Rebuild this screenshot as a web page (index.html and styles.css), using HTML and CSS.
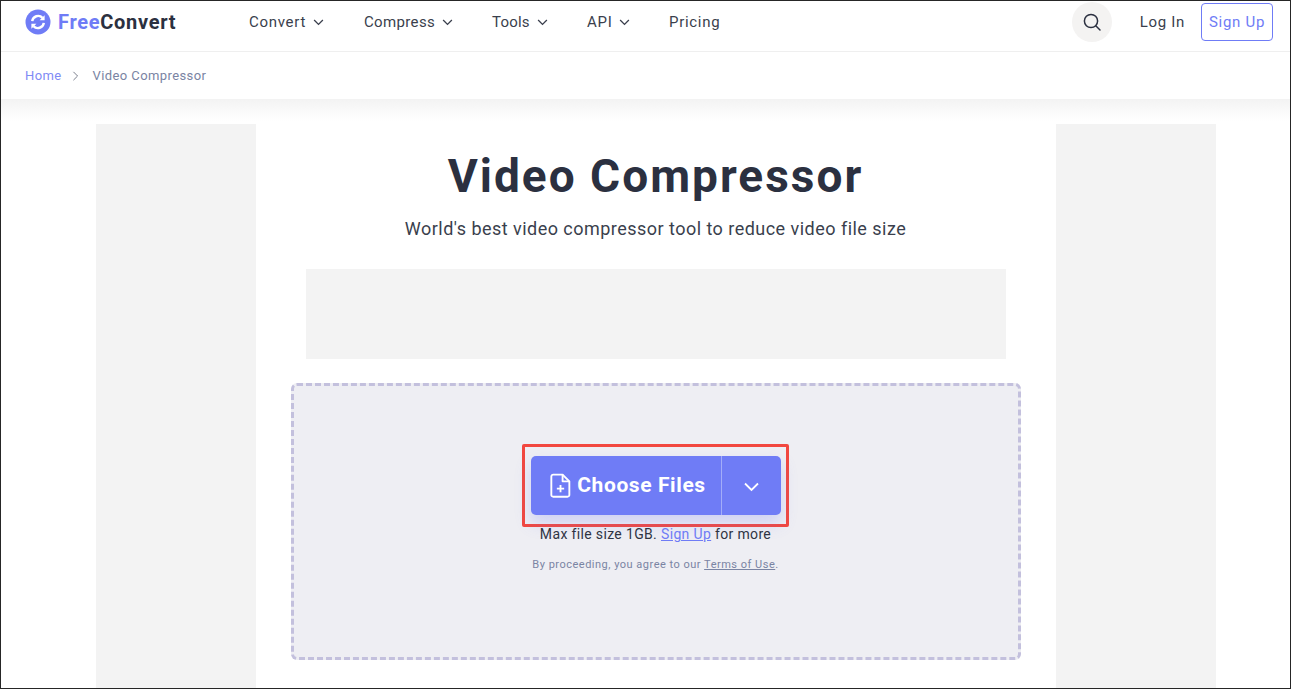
FILE: index.html
```html
<!DOCTYPE html>
<html lang="en">
<head>
    <meta charset="UTF-8">
    <meta name="viewport" content="width=device-width, initial-scale=1.0">
    <title>Video Compressor</title>
    <link rel="stylesheet" href="styles.css">
</head>
<body>
    <div class="frame">
        <!-- Top navigation -->
        <header class="topbar">
            <a class="logo" href="#">
                <svg class="logo-icon" viewBox="0 0 26 26" width="26" height="26">
                    <circle cx="13" cy="13" r="12.5" fill="#6f7cf6"/>
                    <path d="M7.2 12.2a6 6 0 0 1 10.3-3.4" fill="none" stroke="#fff" stroke-width="2.4"/>
                    <path d="M18.8 13.8a6 6 0 0 1-10.3 3.4" fill="none" stroke="#fff" stroke-width="2.4"/>
                    <path d="M19.6 6.2v5h-5z" fill="#fff"/>
                    <path d="M6.4 19.8v-5h5z" fill="#fff"/>
                </svg>
                <span class="logo-free">Free</span><span class="logo-convert">Convert</span>
            </a>
            <nav class="nav">
                <a class="nav-item nav-convert" href="#">Convert
                    <svg class="chev" viewBox="0 0 12 8" width="11" height="7"><path d="M1 1.2l5 5 5-5"/></svg>
                </a>
                <a class="nav-item nav-compress" href="#">Compress
                    <svg class="chev" viewBox="0 0 12 8" width="11" height="7"><path d="M1 1.2l5 5 5-5"/></svg>
                </a>
                <a class="nav-item nav-tools" href="#">Tools
                    <svg class="chev" viewBox="0 0 12 8" width="11" height="7"><path d="M1 1.2l5 5 5-5"/></svg>
                </a>
                <a class="nav-item nav-api" href="#">API
                    <svg class="chev" viewBox="0 0 12 8" width="11" height="7"><path d="M1 1.2l5 5 5-5"/></svg>
                </a>
                <a class="nav-item" href="#">Pricing</a>
            </nav>
            <div class="topbar-right">
                <button class="search-btn">
                    <svg viewBox="0 0 20 20" width="20" height="20">
                        <circle cx="9" cy="9" r="6.6" fill="none" stroke="#2b3040" stroke-width="1.5"/>
                        <path d="M14 14l4 4" stroke="#2b3040" stroke-width="1.5" stroke-linecap="round"/>
                    </svg>
                </button>
                <a class="login" href="#">Log In</a>
                <a class="signup" href="#">Sign Up</a>
            </div>
        </header>

        <!-- Breadcrumb -->
        <div class="breadcrumb">
            <a href="#">Home</a>
            <svg class="crumb-sep" viewBox="0 0 8 12" width="7" height="10"><path d="M1.5 1l5 5-5 5"/></svg>
            <span>Video Compressor</span>
        </div>

        <div class="page">
            <div class="ad-side"></div>
            <main class="main">
                <h1>Video Compressor</h1>
                <p class="subtitle">World's best video compressor tool to reduce video file size</p>
                <div class="ad-top"></div>
                <section class="dropzone">
                    <div class="highlight">
                        <div class="choose-btn">
                            <div class="choose-main">
                                <svg viewBox="0 0 20 24" width="21" height="25">
                                    <path d="M3 1.5h9l6.5 6.5v13a1.8 1.8 0 0 1-1.8 1.8H3A1.8 1.8 0 0 1 1.2 21V3.3A1.8 1.8 0 0 1 3 1.5z" fill="none" stroke="#fff" stroke-width="1.8" stroke-linejoin="round"/>
                                    <path d="M12 1.5V8h6.5" fill="none" stroke="#fff" stroke-width="1.8" stroke-linejoin="round"/>
                                    <path d="M10 11.5v7M6.5 15h7" stroke="#fff" stroke-width="1.8"/>
                                </svg>
                                <span>Choose Files</span>
                            </div>
                            <div class="choose-more">
                                <svg viewBox="0 0 16 10" width="17" height="10"><path d="M1.5 1.5L8 8l6.5-6.5"/></svg>
                            </div>
                        </div>
                    </div>
                    <p class="limit">Max file size 1GB. <a href="#">Sign Up</a> for more</p>
                    <p class="terms">By proceeding, you agree to our <a href="#">Terms of Use</a>.</p>
                </section>
            </main>
            <div class="ad-side"></div>
        </div>
    </div>
</body>
</html>
```

FILE: styles.css
```css
* {
    box-sizing: border-box;
}

html, body {
    margin: 0;
    height: 100%;
}

body {
    font-family: Roboto, "Noto Sans", sans-serif;
    color: #2b3040;
    background: #fff;
    overflow: hidden;
}

a {
    text-decoration: none;
    color: inherit;
}

.frame {
    height: 689px;
    border: 1px solid #262626;
    overflow: hidden;
    background: #fff;
}

/* Top navigation */
.topbar {
    height: 51px;
    display: flex;
    align-items: center;
    padding: 0 17px 9px 24px;
    border-bottom: 1px solid #efefef;
}

.logo {
    display: flex;
    align-items: center;
    width: 224px;
    font-size: 20px;
    font-weight: 700;
    letter-spacing: 0.7px;
}

.logo-icon {
    margin-right: 7px;
}

.logo-free {
    color: #6f7cf6;
}

.logo-convert {
    color: #2b3040;
}

.nav {
    display: flex;
    align-items: center;
    font-size: 15px;
    letter-spacing: 0.7px;
}

.nav-item {
    display: flex;
    align-items: center;
    gap: 7px;
    color: #3a3f4d;
}

.nav-convert {
    width: 115px;
}

.nav-compress {
    width: 128px;
    letter-spacing: 0.35px;
}

.nav-tools {
    width: 95px;
    letter-spacing: 0.2px;
}

.nav-api {
    width: 82px;
}

.chev {
    fill: none;
    stroke: #3a3f4d;
    stroke-width: 1.5;
    margin-top: 2px;
}

.topbar-right {
    margin-left: auto;
    display: flex;
    align-items: center;
}

.search-btn {
    width: 40px;
    height: 40px;
    border: none;
    border-radius: 50%;
    background: #f4f3f2;
    display: flex;
    align-items: center;
    justify-content: center;
    padding: 0;
    margin-right: 28px;
}

.login {
    font-size: 15px;
    letter-spacing: 0.7px;
    color: #3a3f4d;
    margin-right: 16px;
}

.signup {
    width: 72px;
    height: 38px;
    display: flex;
    align-items: center;
    justify-content: center;
    font-size: 15px;
    letter-spacing: 0.7px;
    color: #6f7cf6;
    border: 1px solid #6f7cf6;
    border-radius: 4px;
}

/* Breadcrumb */
.breadcrumb {
    height: 47px;
    display: flex;
    align-items: center;
    padding-left: 24px;
    font-size: 13px;
    letter-spacing: 0.4px;
    color: #7a84a3;
}

.breadcrumb a {
    color: #7f8bf5;
}

.crumb-sep {
    fill: none;
    stroke: #7a7f8c;
    stroke-width: 1.2;
    margin: 0 14px 0 10px;
}

/* Page body */
.page {
    display: flex;
    justify-content: center;
    padding: 25px 0 0 20px;
    background: linear-gradient(#f3f3f3, #fff 22px) no-repeat;
    height: 600px;
}

.ad-side {
    width: 160px;
    background: #f3f3f3;
}

.main {
    width: 800px;
    background: #fff;
    display: flex;
    flex-direction: column;
    align-items: center;
}

h1 {
    margin: 19px 0 0;
    font-size: 46px;
    line-height: 66px;
    font-weight: 700;
    letter-spacing: 2px;
    color: #2b3040;
}

.subtitle {
    margin: 7px 0 0;
    font-size: 18px;
    line-height: 26px;
    letter-spacing: 0.47px;
    color: #3a3f4d;
}

.ad-top {
    width: 700px;
    height: 90px;
    margin-top: 27px;
    background: #f3f3f3;
}

/* Upload box */
.dropzone {
    width: 730px;
    height: 277px;
    margin-top: 24px;
    border: 3px dashed #c3c0dd;
    border-radius: 6px;
    background: #eeeef3;
    display: flex;
    flex-direction: column;
    align-items: center;
    padding-top: 58px;
}

.highlight {
    width: 267px;
    height: 83px;
    border: 3px solid #f2473f;
    border-radius: 2px;
    padding: 9px 6px 0;
}

.choose-btn {
    width: 250px;
    height: 59px;
    display: flex;
    background: #6f7cf6;
    border-radius: 5px;
    box-shadow: 0 8px 16px rgba(111, 124, 246, 0.25);
    color: #fff;
}

.choose-main {
    width: 191px;
    display: flex;
    align-items: center;
    justify-content: center;
    gap: 6px;
    padding: 0 0 2px 4px;
    font-size: 21px;
    font-weight: 700;
    letter-spacing: 0.6px;
    border-right: 1px solid #a3adf9;
}

.choose-main svg {
    margin-top: 2px;
}

.choose-more {
    flex: 1;
    display: flex;
    align-items: center;
    justify-content: center;
    padding-top: 2px;
}

.choose-more svg {
    fill: none;
    stroke: #fff;
    stroke-width: 1.8;
}

.limit {
    margin: -3px 0 0;
    font-size: 14px;
    line-height: 20px;
    letter-spacing: 0.35px;
    color: #2f3443;
}

.limit a {
    color: #6f7cf6;
    text-decoration: underline;
}

.terms {
    margin: 13px 0 0;
    font-size: 11px;
    line-height: 16px;
    letter-spacing: 0.5px;
    color: #7a84a3;
}

.terms a {
    text-decoration: underline;
}
```
